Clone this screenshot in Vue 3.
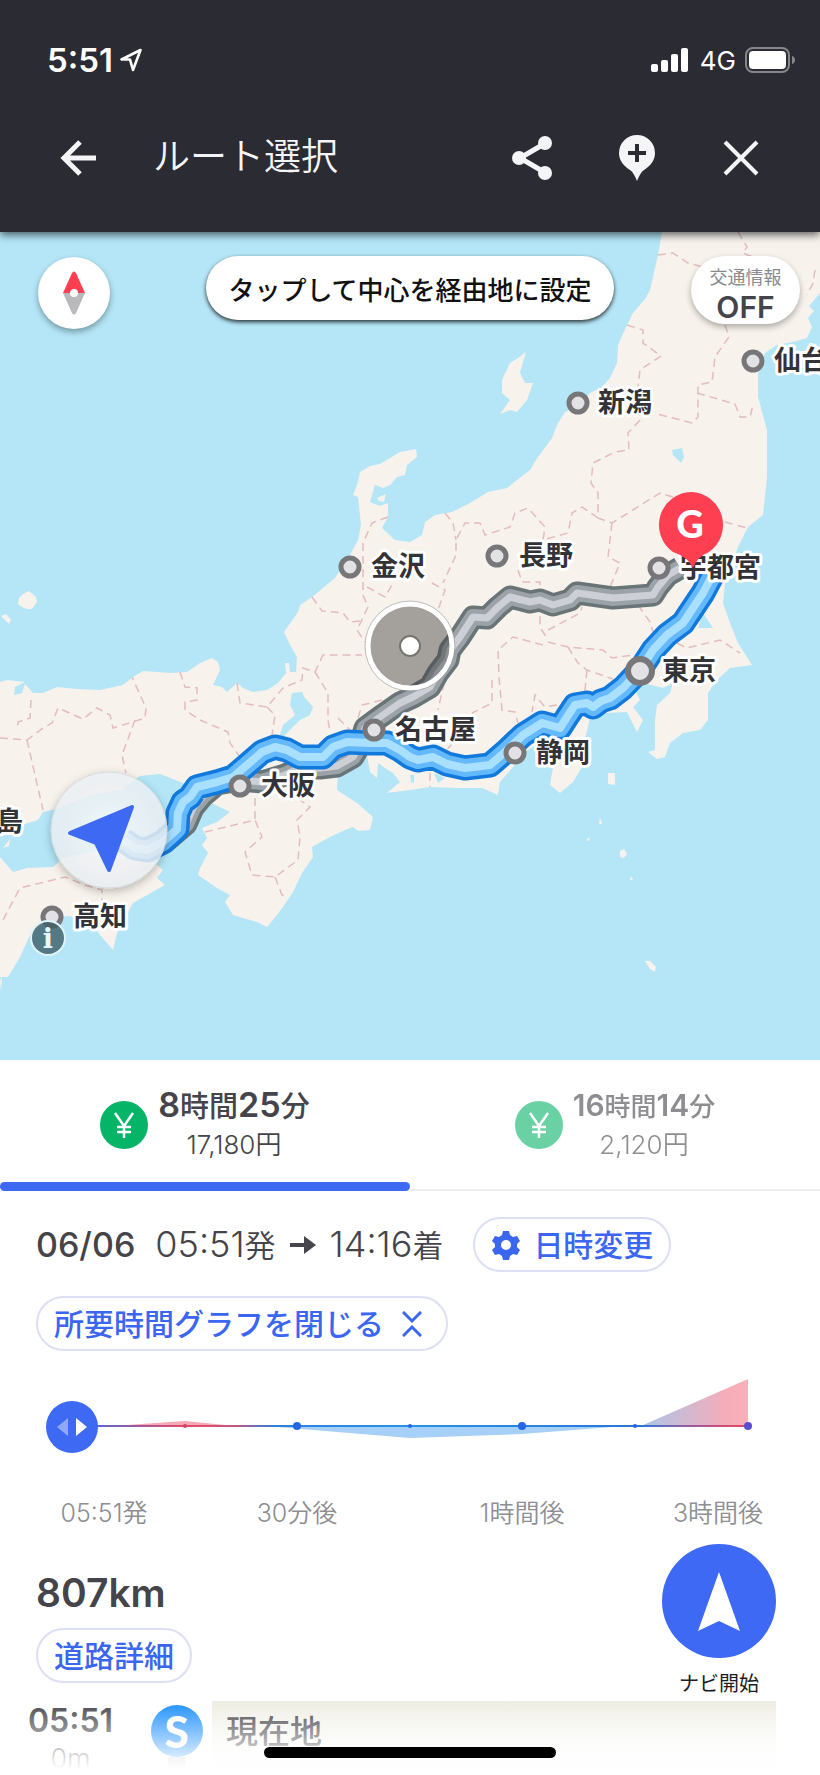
<template>
  <div class="route-page">
    <header class="app-header">
      <div class="status-bar">
        <div class="status-left">
          <span class="clock">5:51</span>
          <svg class="location-icon" viewBox="0 0 24 24" width="24" height="24">
            <path d="M21.500 2 2.500 11.500h8.500l3 10.500z" fill="none" stroke="#fff" stroke-width="2.600" stroke-linejoin="round" />
          </svg>
        </div>
        <div class="status-right">
          <svg viewBox="0 0 40 24" width="40" height="24" fill="#fff">
            <rect x="0" y="16" width="7" height="8" rx="2" />
            <rect x="10" y="12" width="7" height="12" rx="2" />
            <rect x="20" y="6" width="7" height="18" rx="2" />
            <rect x="30" y="0" width="7" height="24" rx="2" />
          </svg>
          <span class="network">4G</span>
          <svg viewBox="0 0 51 26" width="51" height="26">
            <rect x="1" y="1" width="43" height="24" rx="7" fill="none" stroke="#85868c" stroke-width="2" />
            <rect x="4" y="4" width="37" height="18" rx="4" fill="#fff" />
            <path d="M47 9c4 1 4 7 0 8z" fill="#85868c" />
          </svg>
        </div>
      </div>

      <div class="nav-bar">
        <button class="icon-button" type="button" aria-label="戻る">
          <svg viewBox="0 0 40 40" width="40" height="40">
            <path d="M37 20H5M21 4 5 20l16 16" fill="none" stroke="#f5f5f7" stroke-width="5" />
          </svg>
        </button>
        <h1>ルート選択</h1>
        <button class="icon-button" type="button" aria-label="共有">
          <svg viewBox="0 0 44 46" width="44" height="46">
            <path d="M33 9 9 23l24 14" fill="none" stroke="#f5f5f7" stroke-width="5" />
            <circle cx="34" cy="8" r="7" fill="#f5f5f7" />
            <circle cx="8" cy="23" r="7" fill="#f5f5f7" />
            <circle cx="34" cy="38" r="7" fill="#f5f5f7" />
          </svg>
        </button>
        <button class="icon-button" type="button" aria-label="地点を追加">
          <svg viewBox="0 0 36 46" width="36" height="46">
            <path d="M18 0a18 18 0 0 1 18 18c0 8-5 13-11 17-3 2-5 6-7 11-2-5-4-9-7-11C5 31 0 26 0 18A18 18 0 0 1 18 0z" fill="#f5f5f7" />
            <path d="M18 9v18M9 18h18" stroke="#2b2b34" stroke-width="4" />
          </svg>
        </button>
        <button class="icon-button" type="button" aria-label="閉じる">
          <svg viewBox="0 0 36 36" width="36" height="36">
            <path d="M2 2 34 34M34 2 2 34" stroke="#f5f5f7" stroke-width="4" />
          </svg>
        </button>
      </div>
    </header>

    <section class="map">
      <svg class="map-canvas" viewBox="0 232 820 828">
        <defs>
          <filter id="pinShadow" x="-20%" y="-20%" width="140%" height="150%">
            <feDropShadow dx="0" dy="3" stdDeviation="4" flood-color="#000" flood-opacity=".3" />
          </filter>
          <radialGradient id="cursorGlass">
            <stop offset="0" stop-color="#fff" stop-opacity=".8" />
            <stop offset="1" stop-color="#eef3f7" stop-opacity=".8" />
          </radialGradient>
        </defs>

        <g class="land">
          <polygon v-for="shape in land" :key="shape" :points="shape" />
        </g>
        <g class="water">
          <polygon v-for="shape in lakes" :key="shape" :points="shape" />
        </g>
        <g class="borders">
          <polyline v-for="line in borders" :key="line" :points="line" />
        </g>

        <g class="route">
          <polyline :points="altRoute" stroke="#697476" stroke-width="23" />
          <polyline :points="altRoute" stroke="#9ba3a9" stroke-width="16" />
          <polyline :points="altRoute" stroke="#ccd0d6" stroke-width="7" />
          <polyline :points="mainRoute" stroke="#1279dc" stroke-width="25" />
          <polyline :points="mainRoute" stroke="#64b8fc" stroke-width="18" />
          <polyline :points="mainRoute" stroke="#a9e0ff" stroke-width="8" />
        </g>

        <!-- Cities -->
        <g v-for="city in cities" :key="city.name">
          <circle :cx="city.x" :cy="city.y" :r="city.r || 9" class="city-dot" :class="{ capital: city.r }" />
          <text :x="city.tx" :y="city.y + 9" class="city-name">{{ city.name }}</text>
        </g>
        <text x="-4" y="831" class="city-name">島</text>

        <!-- Goal -->
        <path d="M691 492a33 33 0 0 1 18 60q-12 5-16 16-5-11-20-16a33 33 0 0 1 18-60z" fill="#fe3f51" />
        <text x="690" y="538" class="goal-letter">G</text>

        <!-- Map centre -->
        <circle cx="410" cy="646" r="42" fill="rgba(65, 65, 65, .46)" />
        <circle cx="410" cy="646" r="42" fill="none" stroke="#fff" stroke-width="5" />
        <circle cx="410" cy="646" r="45" fill="none" stroke="#999" stroke-opacity=".6" />
        <circle cx="410" cy="646" r="10" fill="#fff" stroke="#77756f" stroke-width="2" />

        <!-- Current position -->
        <circle cx="109" cy="830" r="58" fill="url(#cursorGlass)" stroke="#d4dadd" filter="url(#pinShadow)" />
        <path d="M132 807 70 833l26 10 13 27z" fill="#3d69f3" stroke="#3d69f3" stroke-width="4" stroke-linejoin="round" />

        <circle cx="48" cy="938" r="17" fill="#3d5e66" fill-opacity=".8" stroke="#dff3f8" stroke-width="2" />
        <text x="48" y="948" class="info-letter">i</text>
      </svg>

      <div class="map-controls">
        <button class="compass" type="button" aria-label="北を上にする">
          <svg viewBox="0 0 24 44" width="24" height="44">
            <path d="M1 22 10 2q2-3 4 0l9 20z" fill="#fe3f51" />
            <path d="M1 22 10 42q2 3 4 0l9-20z" fill="#b9b9bb" />
            <circle cx="12" cy="22" r="4" fill="#fff" />
          </svg>
        </button>
        <button class="waypoint-button" type="button">タップして中心を経由地に設定</button>
        <button class="traffic-button" type="button">
          <span class="traffic-label">交通情報</span>
          <span class="traffic-state">OFF</span>
        </button>
      </div>
    </section>

    <nav class="tabs">
      <button
        v-for="(tab, index) in tabs"
        :key="tab.fare"
        type="button"
        class="tab"
        :class="{ active: index === activeTab }"
        @click="activeTab = index"
      >
        <svg viewBox="0 0 48 48" width="48" height="48">
          <circle cx="24" cy="24" r="24" fill="#06b468" />
          <path d="m15 12 9 13 9-13M24 25v12M17 26h14M17 31h14" fill="none" stroke="#fff" stroke-width="2.500" />
        </svg>
        <span class="tab-text">
          <span class="duration"><b>{{ tab.hours }}</b>時間<b>{{ tab.minutes }}</b>分</span>
          <span class="fare">{{ tab.fare }}円</span>
        </span>
      </button>
    </nav>

    <section class="schedule">
      <div class="date-row">
        <span class="date">06/06</span>
        <span class="time">05:51<small>発</small></span>
        <svg class="arrow" viewBox="0 0 28 20" width="28" height="20">
          <path d="M1 8h14V1l12 9-12 9v-7H1z" fill="#46464c" />
        </svg>
        <span class="time">14:16<small>着</small></span>
        <button class="pill-button" type="button">
          <svg viewBox="0 0 30 30" width="30" height="30">
            <path
              d="M12 1h6l1 4 3 2 4-1 3 5-3 3v3l3 3-3 5-4-1-3 2-1 4h-6l-1-4-3-2-4 1-3-5 3-3v-3l-3-3 3-5 4 1 3-2zM15 10a5 5 0 1 0 0 10 5 5 0 0 0 0-10z"
              fill="#3b66f0"
              fill-rule="evenodd"
            />
          </svg>
          日時変更
        </button>
      </div>
      <button class="pill-button close-graph" type="button">
        所要時間グラフを閉じる
        <svg viewBox="0 0 20 26" width="20" height="26">
          <path d="m1 1 9 9 9-9M1 25l9-9 9 9" fill="none" stroke="#3b66f0" stroke-width="3" />
        </svg>
      </button>
    </section>

    <section class="graph">
      <svg viewBox="0 1364 820 170">
        <defs>
          <linearGradient id="lineColor" gradientUnits="userSpaceOnUse" x1="72" y1="0" x2="748" y2="0">
            <stop offset="0" stop-color="#3d69f3" />
            <stop offset=".08" stop-color="#8a5fa8" />
            <stop offset=".17" stop-color="#e94867" />
            <stop offset=".24" stop-color="#c45680" />
            <stop offset=".3" stop-color="#2f7fe0" />
            <stop offset=".5" stop-color="#2593e6" />
            <stop offset=".84" stop-color="#2b75d8" />
            <stop offset=".9" stop-color="#8a5fa8" />
            <stop offset="1" stop-color="#f04560" />
          </linearGradient>
          <linearGradient id="peakColor">
            <stop offset="0" stop-color="#a9c5ea" />
            <stop offset=".8" stop-color="#f6adb9" />
            <stop offset="1" stop-color="#fab0b9" />
          </linearGradient>
        </defs>
        <path d="M112 1426 185 1421 235 1426z" fill="#f6a9b4" />
        <path d="M265 1426 410 1438 522 1434 625 1426z" fill="#a6d0f7" />
        <path d="M641 1426 748 1379V1426z" fill="url(#peakColor)" />
        <rect x="72" y="1425" width="676" height="2" fill="url(#lineColor)" />
        <circle cx="185" cy="1426" r="2" fill="#cf4763" />
        <circle cx="297" cy="1426" r="4" fill="#2467e5" />
        <circle cx="410" cy="1426" r="2" fill="#2467e5" />
        <circle cx="522" cy="1426" r="4" fill="#2467e5" />
        <circle cx="635" cy="1426" r="2" fill="#2467e5" />
        <circle cx="748" cy="1426" r="4" fill="#5a4fd0" />
        <g :transform="`translate(${knobX} 1427)`">
          <circle r="26" fill="#3d69f3" />
          <path d="M-4-9v18L-15 0z" fill="#8fa9f8" />
          <path d="M4-9v18L15 0z" fill="#fff" />
        </g>
        <text x="104" y="1522">05:51発</text>
        <text x="297" y="1522">30分後</text>
        <text x="522" y="1522">1時間後</text>
        <text x="718" y="1522">3時間後</text>
      </svg>
      <input v-model.number="offset" type="range" min="0" max="6" aria-label="出発時刻" />
    </section>

    <section class="summary">
      <div>
        <p class="distance">807km</p>
        <button class="pill-button" type="button">道路詳細</button>
      </div>
      <button class="start-button" type="button">
        <svg viewBox="0 0 114 114" width="114" height="114">
          <circle cx="57" cy="57" r="57" fill="#3d69f5" />
          <path d="M57 28 78 87 57 77 36 87z" fill="#fff" />
        </svg>
        ナビ開始
      </button>
    </section>

    <section class="steps">
      <div class="step-time">
        <strong>05:51</strong>
        <span>0m</span>
      </div>
      <div class="step-marker">
        <span>S</span>
      </div>
      <div class="step-place">現在地</div>
    </section>
    <div class="home-indicator"></div>
  </div>
</template>

<script setup>
import { ref, computed } from 'vue'

const activeTab = ref(0)
const offset = ref(0)

// Graph points are evenly spaced along the line
const knobX = computed(() => 72 + offset.value * 112)

const tabs = [
  { hours: '8', minutes: '25', fare: '17,180' },
  { hours: '16', minutes: '14', fare: '2,120' }
]

const cities = [
  { name: '仙台', x: 753, y: 361, tx: 774 },
  { name: '新潟', x: 578, y: 403, tx: 598 },
  { name: '長野', x: 497, y: 556, tx: 519 },
  { name: '金沢', x: 350, y: 567, tx: 371 },
  { name: '宇都宮', x: 659, y: 568, tx: 680 },
  { name: '東京', x: 640, y: 671, tx: 662, r: 12 },
  { name: '名古屋', x: 374, y: 730, tx: 395 },
  { name: '静岡', x: 515, y: 753, tx: 536 },
  { name: '大阪', x: 240, y: 786, tx: 261 },
  { name: '高知', x: 52, y: 917, tx: 73 }
]

const land = [
  // Honshu
  '662,232 658,255 650,290 645,299 633,313 627,325 618,345 617,363 610,378 602,387 590,393 577,407 565,412 557,425 552,438 538,457 530,470 517,480 507,488 488,492 470,503 452,512 435,515 425,522 422,535 410,542 395,540 382,528 388,517 388,503 380,506 370,502 375,485 383,488 390,485 397,477 405,475 407,465 417,457 416,449 400,452 380,464 370,466 360,472 357,485 353,495 358,497 361,525 358,540 350,555 335,578 312,597 300,605 298,612 284,632 290,645 297,657 296,672 290,672 289,663 285,663 286,673 278,683 267,690 253,692 243,688 237,683 227,692 222,687 213,685 220,670 218,662 212,658 200,663 187,672 170,673 157,672 143,671 133,677 123,685 100,690 77,689 57,687 43,693 33,693 25,684 22,693 14,695 15,687 25,682 7,680 0,682 0,828 25,824 38,820 43,812 60,808 90,795 120,790 140,776 160,774 183,783 205,800 230,812 217,822 202,828 207,838 202,845 208,853 200,868 198,875 217,888 230,895 225,902 233,915 257,922 267,927 273,920 283,907 293,892 302,873 313,857 312,847 330,837 345,830 353,827 358,831 370,830 373,817 357,803 337,790 338,773 353,763 367,755 370,772 377,778 378,763 388,770 393,773 400,782 387,793 410,790 430,787 457,788 482,788 498,795 500,782 513,767 525,752 543,740 553,767 550,785 560,793 573,782 582,767 583,747 588,727 590,718 607,713 627,712 637,732 643,720 633,707 640,700 635,690 643,683 663,688 673,683 670,693 657,705 655,720 655,750 648,752 657,759 665,757 670,743 683,733 700,730 708,720 708,693 717,680 730,668 752,665 738,643 730,623 723,603 725,583 738,547 748,527 763,515 767,477 767,430 758,397 758,373 765,353 777,345 793,342 807,338 812,327 808,318 814,311 809,306 820,293 820,232',
  // Shikoku
  '0,857 13,872 27,868 53,867 63,858 100,850 140,850 163,870 157,878 165,885 133,903 117,933 113,950 100,935 88,918 67,916 45,922 30,935 20,957 8,977 0,977',
  // Sado
  '526,352 523,362 520,373 525,383 533,383 527,400 517,412 510,410 500,414 510,400 502,393 502,380 510,363 518,358',
  // Small islands
  '19,598 23,594 29,591 36,597 37,602 32,609 27,609 22,607 18,604',
  '1,616 6,614 11,620 9,624 4,619',
  '0,981 2,976 1,992',
  '377,498 386,494 384,502 379,501',
  '608,773 615,773 615,785 608,784',
  '600,817 602,824 599,824',
  '586,840 590,837 589,841',
  '620,851 624,849 627,854 624,858 620,857',
  '631,876 633,880 630,880',
  '645,961 650,961 656,967 655,972 650,969',
  '3,848 10,839 9,846'
]

const lakes = [
  '292,693 302,692 305,698 313,707 310,715 300,720 283,737 280,735 283,725 295,715 290,705',
  '672,450 682,448 684,457 681,463 673,455',
  '703,613 713,628 698,628',
  '410,775 414,775 414,783 411,782',
  '434,773 445,778 438,783'
]

const borders = [
  '658,255 673,253 688,263 703,267',
  '738,232 747,247 743,253 753,257',
  '815,270 813,283 807,295',
  '627,325 643,330 643,343 661,356 640,370 638,387',
  '725,325 729,337 715,357 712,382 698,385 698,417 692,423 657,414',
  '697,393 735,404 740,417 750,417 753,405',
  '640,420 628,433 629,450 615,452 593,463 591,483 598,493 598,518 612,523 660,493 673,497',
  '725,522 747,528',
  '612,523 608,557 620,563 610,587',
  '598,518 582,507 572,513 568,533 543,540 545,527 528,508 515,513 510,527 485,535 480,523 465,523 456,540 456,555 443,583',
  '445,513 453,523 456,540',
  '518,570 522,582 540,582 540,627 548,640',
  '548,630 580,613 582,607',
  '548,642 568,647 603,650 612,658 640,654',
  '568,647 578,663 587,670 613,679',
  '587,670 585,690 557,705 545,707 535,695 532,712',
  '543,645 513,637 498,650 499,677 502,710 515,712 518,723',
  '492,680 492,703 472,713',
  '638,605 650,622 655,638',
  '677,643 687,648 720,640 740,653',
  '447,670 438,710',
  '453,743 430,767 430,787',
  '31,700 30,718 18,722 17,730',
  '0,738 27,740 43,728 52,723 58,708 83,719 97,708 110,715 113,728 145,718 146,708 132,677',
  '27,740 43,810',
  '135,720 122,755 126,773',
  '180,672 185,687 197,688 197,700 185,702 185,710 200,720 228,732 230,743 240,757 242,763',
  '237,683 240,703 267,707 283,688 302,680 303,668 315,672 323,655 362,655',
  '267,707 275,715 272,735',
  '315,672 328,693 328,720 330,732',
  '338,718 350,730',
  '382,700 362,705 358,718',
  '205,832 255,820 262,837 245,852 252,875 275,877 298,860 300,837 297,820 310,807 300,800',
  '255,798 255,820',
  '275,877 282,895 288,895',
  '3,920 20,888 65,877 85,885 102,890 102,900',
  '388,517 372,523 363,543 363,595 368,607 357,630 365,642',
  '312,597 322,611 343,613 350,622 360,621',
  '367,587 385,597 393,583',
  '432,583 445,590 437,613'
]

const mainRoute =
  '123,840 135,848 147,850 163,842 177,829 178,813 183,802 190,797 197,787 217,782 233,777 247,765 262,752 275,747 287,750 300,757 323,757 333,747 347,742 370,743 387,743 400,750 410,757 418,760 433,757 447,764 465,768 490,765 505,752 523,735 542,723 560,728 567,717 575,705 587,703 593,707 601,701 610,698 623,688 640,670 653,650 667,635 683,623 693,608 703,593 712,576'

const altRoute =
  '680,568 668,575 658,587 653,595 613,598 577,593 570,600 553,605 540,600 530,602 510,597 498,607 487,618 473,617 460,637 450,650 448,660 438,673 430,687 413,697 400,703 380,717 365,728 360,745 353,757 337,766 320,768 300,768 285,775 262,782 240,780 217,784 203,796 193,808 186,824 165,842 147,850'
</script>

<style>
body {
  margin: 0;
  background: #fff;
}
</style>

<style scoped>
.route-page {
  position: relative;
  display: flex;
  flex-direction: column;
  height: 100vh;
  overflow: hidden;
  background: #fff;
  color: #44444a;
  font-family: Inter, "Noto Sans CJK JP", sans-serif;
}

button {
  margin: 0;
  padding: 0;
  border: 0;
  background: none;
  color: inherit;
  font: inherit;
  cursor: pointer;
}

svg {
  flex-shrink: 0;
  display: block;
}

.route-page > * {
  flex-shrink: 0;
}

/* Header */
.app-header {
  position: relative;
  z-index: 2;
  display: flex;
  flex-direction: column;
  gap: 40px;
  padding: 38px 0;
  background: #2b2b34;
  box-shadow: 0 3px 8px rgba(0, 0, 0, 0.6);
}

.status-bar {
  display: flex;
  align-items: center;
  justify-content: space-between;
  height: 44px;
  padding: 0 24px 0 47px;
  color: #fff;
}

.status-left,
.status-right {
  display: flex;
  align-items: center;
}

.status-left {
  gap: 6px;
}

.status-right {
  gap: 9px;
}

.clock {
  font-size: 33px;
  font-weight: 600;
}

.network {
  font-size: 26px;
  font-weight: 400;
}

.nav-bar {
  display: flex;
  align-items: center;
  gap: 32px;
  height: 72px;
  padding: 0 43px;
}

.nav-bar h1 {
  flex: 1;
  margin: 0 0 0 6px;
  color: #f5f5f7;
  font-size: 37px;
  font-weight: 350;
  line-height: 44px;
  padding-bottom: 3px;
}

.icon-button {
  display: flex;
  align-items: center;
  justify-content: center;
  width: 72px;
  height: 72px;
}

/* Map */
.map {
  position: relative;
  background: #b4e6f7;
}

.map-canvas {
  width: 100%;
}

.land {
  fill: #f7f2eb;
}

.water {
  fill: #b4e6f7;
}

.borders {
  fill: none;
  stroke: #e3bcc0;
  stroke-width: 1.5;
  stroke-dasharray: 8 5;
}

.route {
  fill: none;
  stroke-linejoin: round;
}

.city-dot {
  fill: #e2e2e5;
  stroke: #777779;
  stroke-width: 5;
}

.city-dot.capital {
  stroke-width: 6;
}

.city-name {
  fill: #333337;
  stroke: #fff;
  stroke-width: 6;
  stroke-linejoin: round;
  paint-order: stroke;
  font-size: 27px;
  font-weight: 700;
}

.goal-letter {
  fill: #fff;
  font-family: Lato, sans-serif;
  font-size: 38px;
  font-weight: 900;
  text-anchor: middle;
}

.info-letter {
  fill: #e6f6fa;
  font-family: "DejaVu Serif", serif;
  font-size: 27px;
  font-weight: 700;
  text-anchor: middle;
}

.map-controls {
  position: absolute;
  top: 24px;
  left: 0;
  right: 0;
  display: grid;
  grid-template-columns: 1fr auto 1fr;
  align-items: start;
  padding: 0 20px;
}

.compass {
  display: flex;
  align-items: center;
  justify-content: center;
  width: 72px;
  height: 72px;
  margin: 1px 0 0 18px;
  border-radius: 50%;
  background: #fff;
  box-shadow: 0 3px 6px rgba(0, 0, 0, 0.35);
}

.waypoint-button {
  height: 64px;
  padding: 0 22px;
  border-radius: 32px;
  background: #fff;
  box-shadow: 0 2px 4px rgba(0, 0, 0, 0.8);
  color: #111;
  font-size: 26px;
  font-weight: 500;
}

.traffic-button {
  justify-self: end;
  display: flex;
  flex-direction: column;
  align-items: center;
  justify-content: flex-end;
  width: 109px;
  height: 68px;
  padding-bottom: 1px;
  border-radius: 34px;
  background: #fff;
  box-shadow: 0 3px 6px rgba(0, 0, 0, 0.3);
}

.traffic-label {
  color: #8a8a8e;
  font-size: 18px;
  line-height: 26px;
}

.traffic-state {
  font-size: 30px;
  font-weight: 600;
  line-height: 32px;
}

/* Route tabs */
.tabs {
  display: flex;
}

.tab {
  flex: 1;
  display: flex;
  align-items: center;
  justify-content: center;
  gap: 10px;
  height: 131px;
  border-bottom: 2px solid #ececee;
}

.tab > * {
  opacity: 0.6;
}

.tab.active {
  position: relative;
  border-bottom-color: transparent;
}

.tab.active > * {
  opacity: 1;
}

.tab.active::after {
  content: "";
  position: absolute;
  left: 0;
  right: 0;
  bottom: -2px;
  height: 9px;
  border-radius: 5px;
  background: #3d69f3;
}

.tab-text {
  display: flex;
  flex-direction: column;
  align-items: center;
  gap: 2px;
}

.duration {
  font-size: 26px;
  font-weight: 500;
  line-height: 36px;
}

.duration b {
  font-size: 30px;
  font-weight: 600;
}

.active .duration {
  font-size: 29px;
}

.active .duration b {
  font-size: 34px;
}

.fare {
  font-size: 26px;
  font-weight: 350;
  line-height: 36px;
}

/* Date and time */
.schedule {
  padding: 26px 36px 13px;
}

.date-row {
  display: flex;
  align-items: center;
  margin-bottom: 24px;
}

.date {
  margin-right: 20px;
  font-size: 34px;
  font-weight: 500;
}

.time {
  font-size: 36px;
  font-weight: 350;
  line-height: 48px;
}

.time small {
  font-size: 31px;
}

.arrow {
  margin: 0 13px;
}

.date-row .pill-button {
  margin-left: 30px;
}

.pill-button {
  display: flex;
  align-items: center;
  gap: 12px;
  box-sizing: border-box;
  height: 55px;
  padding: 0 16px;
  border: 2px solid #dddff5;
  border-radius: 28px;
  color: #3b66f0;
  font-size: 30px;
  font-weight: 500;
  line-height: 50px;
}

.close-graph {
  gap: 18px;
  padding-right: 24px;
}

/* Travel time graph */
.graph {
  position: relative;
}

.graph svg {
  width: 100%;
}

.graph text {
  fill: #8e8e93;
  font-size: 25px;
  font-weight: 350;
  text-anchor: middle;
}

.graph input {
  position: absolute;
  top: 36px;
  left: 46px;
  right: 46px;
  height: 54px;
  margin: 0;
  opacity: 0;
}

/* Distance and navigation */
.summary {
  display: flex;
  justify-content: space-between;
  align-items: flex-start;
  padding: 10px 44px 2px 36px;
}

.distance {
  margin: 23px 0 9px;
  font-size: 39px;
  font-weight: 600;
  line-height: 52px;
}

.start-button {
  display: flex;
  flex-direction: column;
  align-items: center;
  gap: 11px;
  color: #1c1c1e;
  font-size: 20px;
  line-height: 30px;
}

/* Steps */
.steps {
  position: relative;
  flex: 1;
  display: flex;
  padding: 0 44px 0 24px;
}

.steps::after {
  content: "";
  position: absolute;
  inset: 0;
  background: linear-gradient(rgba(255, 255, 255, 0), #fff 90%);
}

.step-time {
  display: flex;
  flex-direction: column;
  align-items: center;
  width: 93px;
}

.step-time strong {
  font-size: 32px;
  font-weight: 600;
  line-height: 40px;
}

.step-time span {
  font-size: 27px;
  font-weight: 300;
  line-height: 36px;
}

.step-marker {
  display: flex;
  flex-direction: column;
  align-items: center;
  width: 71px;
  padding: 4px 0 0 24px;
}

.step-marker span {
  width: 52px;
  height: 52px;
  border-radius: 50%;
  background: #1e90ff;
  color: #fff;
  font-family: Lato, sans-serif;
  font-size: 44px;
  font-weight: 900;
  line-height: 52px;
  text-align: center;
}

.step-marker::after {
  content: "";
  flex: 1;
  width: 18px;
  background: #c8c8cc;
}

.step-place {
  flex: 1;
  padding: 8px 14px 0;
  background: linear-gradient(#eeede2, #fafaf8 70%);
  font-size: 32px;
  font-weight: 500;
  line-height: 46px;
}

.home-indicator {
  position: absolute;
  left: 50%;
  bottom: 17px;
  width: 292px;
  height: 11px;
  border-radius: 6px;
  background: #000;
  transform: translateX(-50%);
}
</style>
